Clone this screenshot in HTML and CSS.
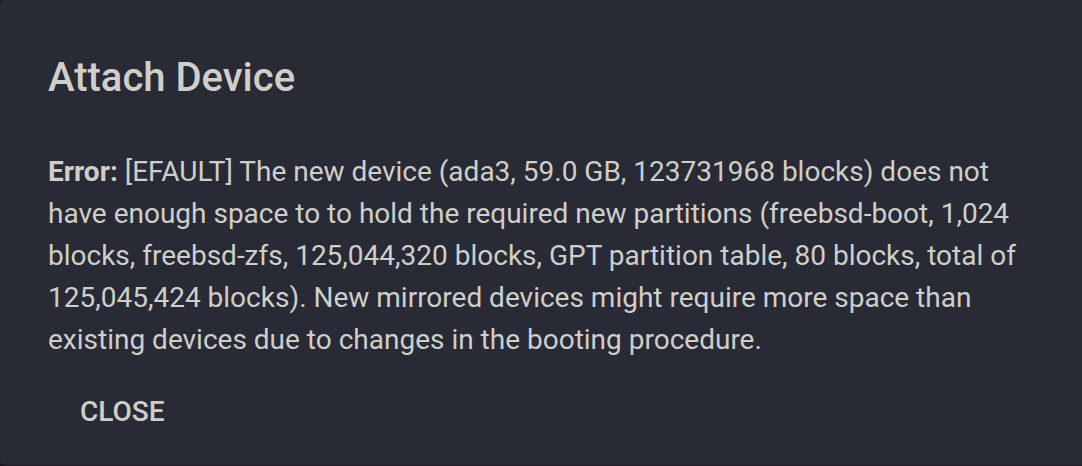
FILE: index.html
```html
<!DOCTYPE html>
<html>
<head>
<meta charset="utf-8">
<link rel="stylesheet" href="styles.css">
</head>
<body>
<div class="dialog">
  <h2 class="title">Attach Device</h2>
  <div class="content">
    <p class="message"><strong>Error:</strong> [EFAULT] The new device (ada3, 59.0 GB, 123731968 blocks) does not have enough space to to hold the required new partitions (freebsd-boot, 1,024 blocks, freebsd-zfs, 125,044,320 blocks, GPT partition table, 80 blocks, total of 125,045,424 blocks). New mirrored devices might require more space than existing devices due to changes in the booting procedure.</p>
  </div>
  <div class="actions">
    <button class="btn">CLOSE</button>
  </div>
</div>
</body>
</html>
```
FILE: styles.css
```css
html, body {
  margin: 0;
  padding: 0;
  background: #1b1c22;
  height: 466px;
  overflow: hidden;
}
.dialog {
  box-sizing: border-box;
  width: 1082px;
  height: 465px;
  background: #282a36;
  border-radius: 5px 0 0 5px;
  padding: 48px 48px 0 48px;
  font-family: Roboto, "Liberation Sans", sans-serif;
  color: #cfcfc8;
  display: flex;
  flex-direction: column;
}
.title {
  margin: 0;
  font-size: 40px;
  font-weight: 500;
  line-height: 60px;
}
.content {
  margin-top: 43px;
}
.message {
  margin: 0;
  font-size: 28px;
  line-height: 42px;
}
.message strong {
  font-weight: 700;
}
.actions {
  margin-top: 21px;
  display: flex;
}
.btn {
  background: none;
  border: none;
  color: #cfcfc8;
  font-family: Roboto, "Liberation Sans", sans-serif;
  font-size: 28px;
  font-weight: 500;
  padding: 0 32px;
  line-height: 60px;
}
```
